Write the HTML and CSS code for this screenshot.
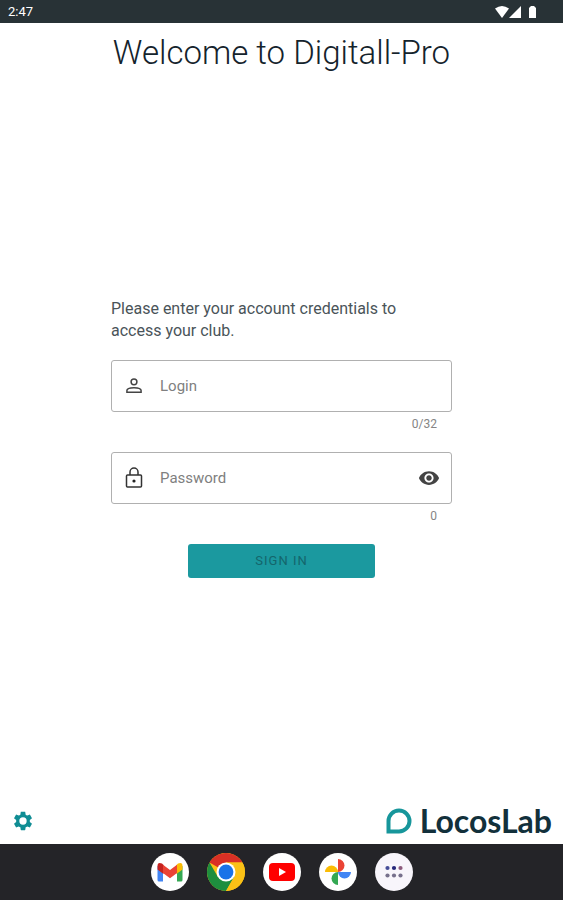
FILE: index.html
```html
<!DOCTYPE html>
<html lang="en">
<head>
    <meta charset="UTF-8">
    <meta name="viewport" content="width=device-width, initial-scale=1.0">
    <title>Digitall-Pro</title>
    <link rel="stylesheet" href="styles.css">
</head>
<body>
    <div class="status-bar">
        <span>2:47</span>
        <svg class="status-icons" width="44" height="14" viewBox="0 0 44 14" fill="#fff">
            <path d="M0 3.500Q7 -1.500 14 3.500L7 13z"/>
            <path d="M26 1v12H14z"/>
            <path d="M34 3l2-2h3l2 2v10h-7z"/>
        </svg>
    </div>

    <header class="header">
        <h1>Welcome to Digitall-Pro</h1>
    </header>

    <main class="content">
        <form class="login-form">
            <p class="intro">Please enter your account credentials to access your club.</p>

            <div class="field">
                <label for="login">
                    <svg width="20" height="20" viewBox="0 0 24 24" fill="none" stroke="#444" stroke-width="1.800">
                        <circle cx="12" cy="7" r="3.500"/>
                        <path d="M3.500 19.500v-2c0-2.500 5-3.500 8.500-3.500s8.500 1 8.500 3.500v2z"/>
                    </svg>
                </label>
                <input type="text" id="login" placeholder="Login" aria-label="Login" maxlength="32">
            </div>
            <div class="counter">0/32</div>

            <div class="field">
                <label for="password">
                    <svg width="20" height="24" viewBox="0 0 20 24" fill="none" stroke="#333" stroke-width="1.500">
                        <rect x="2.500" y="9" width="15" height="12" rx="1"/>
                        <path d="M6 9V6a4 4 0 0 1 8 0v3"/>
                        <circle cx="10" cy="15" r="1.600" fill="#222" stroke="none"/>
                    </svg>
                </label>
                <input type="password" id="password" placeholder="Password" aria-label="Password">
                <button type="button" class="toggle" aria-label="Show password">
                    <svg width="22" height="22" viewBox="0 0 24 24" fill="#444">
                        <path d="M12 4.500C7 4.500 2.730 7.610 1 12c1.730 4.390 6 7.500 11 7.500s9.270-3.110 11-7.500c-1.730-4.390-6-7.500-11-7.500zM12 17c-2.760 0-5-2.240-5-5s2.240-5 5-5 5 2.240 5 5-2.240 5-5 5zm0-8c-1.660 0-3 1.340-3 3s1.340 3 3 3 3-1.340 3-3-1.340-3-3-3z"/>
                    </svg>
                </button>
            </div>
            <div class="counter">0</div>

            <button type="submit" class="sign-in">SIGN IN</button>
        </form>
    </main>

    <footer class="footer">
        <button type="button" class="settings" aria-label="Settings">
            <svg width="22" height="22" viewBox="0 0 24 24" fill="#0f8d94">
                <path d="M19.430 12.980c.04-.32.07-.64.07-.98s-.03-.66-.07-.98l2.110-1.650c.19-.15.24-.42.12-.64l-2-3.460c-.12-.22-.39-.3-.61-.22l-2.490 1c-.52-.4-1.080-.73-1.690-.98l-.38-2.650C14.460 2.180 14.250 2 14 2h-4c-.25 0-.46.18-.49.42l-.38 2.650c-.61.25-1.170.59-1.690.98l-2.490-1c-.23-.09-.49 0-.61.22l-2 3.460c-.13.22-.07.49.12.64l2.110 1.650c-.04.32-.07.65-.07.98s.03.66.07.98l-2.110 1.650c-.19.15-.24.42-.12.64l2 3.460c.12.22.39.3.61.22l2.490-1c.52.4 1.080.73 1.690.98l.38 2.650c.03.24.24.42.49.42h4c.25 0 .46-.18.49-.42l.38-2.650c.61-.25 1.170-.59 1.690-.98l2.490 1c.23.09.49 0 .61-.22l2-3.460c.12-.22.07-.49-.12-.64l-2.110-1.650zM12 16a4 4 0 1 1 0-8 4 4 0 0 1 0 8z"/>
            </svg>
        </button>
        <div class="brand">
            <svg width="26" height="26" viewBox="0 0 26 26" fill="none" stroke="#17969b" stroke-width="4">
                <path d="M2.500 23.500V13a10.500 10.500 0 1 1 10.500 10.500z"/>
            </svg>
            <span>LocosLab</span>
        </div>
    </footer>

    <nav class="dock">
        <a href="#" aria-label="Gmail">
            <svg viewBox="0 0 38 38">
                <circle cx="19" cy="19" r="19" fill="#fff"/>
                <path d="M6.500 13v14q0 1.500 1.500 1.500h4V16z" fill="#4285f4"/>
                <path d="M31.500 13v14q0 1.500-1.500 1.500h-4V16z" fill="#34a853"/>
                <path d="M25.500 12l1.500-1.500q4.500-2 4.500 2.500v3.500l-6 4.500z" fill="#fbbc04"/>
                <path d="M12.500 12L11 10.500Q6.500 8.500 6.500 13v3.500l6 4.500z" fill="#c5221f"/>
                <path d="M12 11.700l7 5.300 7-5.300V20l-7 5.300L12 20z" fill="#ea4335"/>
            </svg>
        </a>
        <a href="#" aria-label="Chrome">
            <svg viewBox="0 0 38 38">
                <circle cx="19" cy="19" r="19" fill="#fbc116"/>
                <path d="M19 19L2.550 9.500A19 19 0 0 1 35.450 9.500H19z" fill="#d93025"/>
                <path d="M2.550 9.500A19 19 0 0 0 19 38l8.230-14.250L19 19l-8.230 4.750z" fill="#1e8e3e"/>
                <path d="M19 9.500h16.450A19 19 0 0 1 19 38l8.230-14.250z" fill="#fbc116"/>
                <circle cx="19" cy="19" r="9.500" fill="#fff"/>
                <circle cx="19" cy="19" r="7.400" fill="#1a73e8"/>
            </svg>
        </a>
        <a href="#" aria-label="YouTube">
            <svg viewBox="0 0 38 38">
                <circle cx="19" cy="19" r="19" fill="#fff"/>
                <rect x="6" y="10" width="26" height="18" rx="4" fill="#f00"/>
                <path d="M16 15v8l7-4z" fill="#fff"/>
            </svg>
        </a>
        <a href="#" aria-label="Photos">
            <svg viewBox="0 0 38 38">
                <circle cx="19" cy="19" r="19" fill="#fff"/>
                <path d="M19 19V6a6.500 6.500 0 0 1 0 13z" fill="#ea4335"/>
                <path d="M19 19h13a6.500 6.500 0 0 1-13 0z" fill="#4285f4"/>
                <path d="M19 19v13a6.500 6.500 0 0 1 0-13z" fill="#34a853"/>
                <path d="M19 19H6a6.500 6.500 0 0 1 13 0z" fill="#fbbc04"/>
            </svg>
        </a>
        <a href="#" aria-label="All apps">
            <svg viewBox="0 0 38 38">
                <circle cx="19" cy="19" r="19" fill="#f8f5fb"/>
                <g fill="#77708c">
                    <circle cx="12.500" cy="15" r="2.100" fill="#454c98"/>
                    <circle cx="19" cy="15" r="2.100" fill="#26277a"/>
                    <circle cx="25.500" cy="15" r="2.100" fill="#8c5a7c"/>
                    <circle cx="12.500" cy="22.500" r="2.100"/>
                    <circle cx="19" cy="22.500" r="2.100"/>
                    <circle cx="25.500" cy="22.500" r="2.100"/>
                </g>
            </svg>
        </a>
    </nav>
</body>
</html>
```
FILE: styles.css
```css
* {
    box-sizing: border-box;
}
body {
    margin: 0;
    min-height: 100vh;
    display: flex;
    flex-direction: column;
    font-family: Roboto, sans-serif;
    background-color: #fff;
    color: #263238;
}
button {
    font-family: inherit;
    border: none;
    background: none;
    padding: 0;
    cursor: pointer;
}
svg {
    display: block;
}
.status-bar {
    height: 23px;
    display: flex;
    justify-content: space-between;
    align-items: center;
    padding: 0 24px 0 8px;
    background-color: #283236;
    color: #fff;
    font-size: 13px;
}
.header {
    padding: 10px 16px;
    text-align: center;
}
.header h1 {
    margin: 0;
    font-size: 33px;
    line-height: 40px;
    font-weight: 300;
    color: #14232c;
}
.content {
    flex: 1;
    display: flex;
    justify-content: center;
    align-items: center;
    padding: 0 16px 6px;
}
.login-form {
    width: 100%;
    max-width: 341px;
}
.intro {
    margin: 0 0 18px;
    padding-right: 15px;
    font-size: 16px;
    line-height: 22px;
    color: #4a5459;
}
.field {
    display: flex;
    align-items: center;
    height: 52px;
    padding: 0 11px 0 12px;
    border: 1px solid #b0b0b0;
    border-radius: 3px;
}
.field input {
    flex: 1;
    min-width: 0;
    margin-left: 16px;
    padding: 0;
    border: none;
    outline: none;
    background: none;
    font-family: inherit;
    font-size: 15px;
    color: #263238;
}
.field input::placeholder {
    color: #808080;
    opacity: 1;
}
.counter {
    height: 40px;
    padding: 4px 15px 0;
    font-size: 12px;
    line-height: 17px;
    text-align: right;
    color: #858585;
}
.sign-in {
    display: block;
    width: 55%;
    height: 34px;
    margin: 0 auto;
    border-radius: 3px;
    background-color: #1b999f;
    color: #14666c;
    font-size: 13px;
    font-weight: 400;
    letter-spacing: 1px;
}
.footer {
    display: flex;
    justify-content: space-between;
    align-items: center;
    height: 46px;
    padding: 0 11px 0 12px;
}
.brand {
    display: flex;
    align-items: center;
    gap: 8px;
    font-family: Lato, sans-serif;
    font-size: 32px;
    line-height: 40px;
    font-weight: 700;
    color: #12303b;
}
.dock {
    display: flex;
    justify-content: center;
    align-items: center;
    gap: 18px;
    height: 56px;
    background-color: #242428;
}
.dock svg {
    width: 38px;
    height: 38px;
}
```
